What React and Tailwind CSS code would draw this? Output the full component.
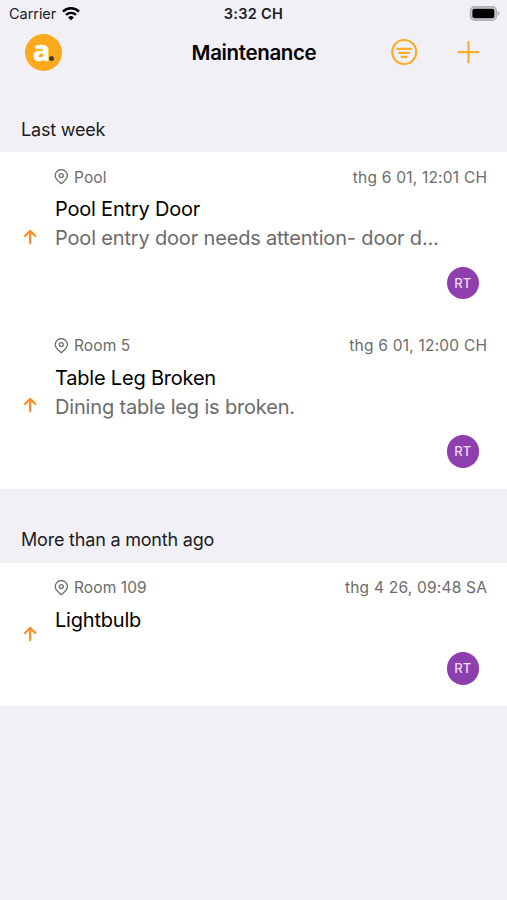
import { clsx } from 'clsx';

const SECTIONS = [
  {
    title: 'Last week',
    tasks: [
      {
        id: 1,
        place: 'Pool',
        date: 'thg 6 01, 12:01 CH',
        title: 'Pool Entry Door',
        description: 'Pool entry door needs attention- door d...',
        assignee: 'RT',
      },
      {
        id: 2,
        place: 'Room 5',
        date: 'thg 6 01, 12:00 CH',
        title: 'Table Leg Broken',
        description: 'Dining table leg is broken.',
        assignee: 'RT',
      },
    ],
  },
  {
    title: 'More than a month ago',
    tasks: [
      {
        id: 3,
        place: 'Room 109',
        date: 'thg 4 26, 09:48 SA',
        title: 'Lightbulb',
        assignee: 'RT',
      },
    ],
  },
];

function WifiIcon() {
  return (
    <svg className="ml-[6px] h-[14px] w-[18px]" viewBox="0 0 18 14" fill="none" stroke="#000" strokeWidth="2.4">
      <path d="M1 4.6a11.4 11.4 0 0 1 16 0" />
      <path d="M4 7.9a7.1 7.1 0 0 1 10 0" />
      <path d="M9 13.3 6.1 10.4a4.1 4.1 0 0 1 5.8 0Z" fill="#000" stroke="none" />
    </svg>
  );
}

function BatteryIcon() {
  return (
    <svg className="h-[15px] w-[31px]" viewBox="0 0 31 15">
      <rect x="1.6" y="0.9" width="25.8" height="13.2" rx="4.2" fill="#d5d5d9" stroke="#b0b0b3" strokeWidth="1.6" />
      <rect x="3.4" y="2.7" width="22" height="9.6" rx="2" fill="#000" />
      <path d="M28.6 5.2c1.2.4 1.9 1.3 1.9 2.3s-.7 1.9-1.9 2.3Z" fill="#b0b0b3" />
    </svg>
  );
}

function PinIcon() {
  return (
    <svg className="h-[16px] w-[14px]" viewBox="0 0 14 16" fill="none" stroke="#6b6b6b" strokeWidth="1.3">
      <path d="M7.3 14.7C6.2 13.2 1.2 10.6 1.2 6.7a6.1 6.1 0 0 1 12.2 0C13.4 10.6 8.4 13.2 7.3 14.7Z" strokeLinejoin="round" />
      <circle cx="7.3" cy="6.6" r="2" />
    </svg>
  );
}

function ArrowUpIcon() {
  return (
    <svg
      className="h-[16px] w-[14px]"
      viewBox="0 0 14 16"
      fill="none"
      stroke="#f8922f"
      strokeWidth="2.3"
      strokeLinecap="round"
      strokeLinejoin="round"
    >
      <path d="M7.2 14.2V2M2.1 7 7.2 1.9 12.3 7" />
    </svg>
  );
}

function StatusBar() {
  return (
    <div className="grid h-[27px] grid-cols-3 items-center pl-[9px] pr-[7px] text-[14.5px] leading-none text-[#1c1c1e]">
      <div className="flex items-center">
        <span className="pt-px tracking-[-0.05px]">Carrier</span>
        <WifiIcon />
      </div>
      <span className="-ml-[2px] pt-[2px] text-center text-[14.5px] font-semibold tracking-[0.3px]">3:32 CH</span>
      <div className="flex justify-end">
        <BatteryIcon />
      </div>
    </div>
  );
}

function NavBar() {
  return (
    <header className="grid h-[50px] grid-cols-[1fr_auto_1fr] items-center pl-[25px] pr-[27px]">
      <div className="flex size-[37px] items-center justify-center rounded-full bg-[#fcaa1b] pb-[4px]">
        <span className="font-['Open_Sans'] text-[29px] font-bold leading-[30px] text-white [-webkit-text-stroke:0.6px_white]">a</span>
        <span className="-ml-px mt-[16px] size-[5px] rounded-full bg-[#3f3a35]" />
      </div>
      <h1 className="pl-[3px] pt-[2px] text-[20.5px] font-semibold tracking-[-0.35px] text-black">Maintenance</h1>
      <div className="flex items-center justify-end gap-[39px]">
        <button type="button" aria-label="Filter">
          <svg className="size-[27px]" viewBox="0 0 27 27" fill="none" stroke="#fbad2b" strokeWidth="2.2" strokeLinecap="round">
            <circle cx="13.2" cy="13" r="12" />
            <path d="M6.3 9.8h13.8M8.3 13.8h9.8M10.7 17.8h5" />
          </svg>
        </button>
        <button type="button" aria-label="Add">
          <svg className="size-[23px]" viewBox="0 0 23 23" fill="none" stroke="#fbad2b" strokeWidth="2.2" strokeLinecap="round">
            <path d="M11.5 1.2v20M1.5 11.2h20" />
          </svg>
        </button>
      </div>
    </header>
  );
}

function TaskRow({ task }) {
  return (
    <li className={clsx('flex items-center bg-white pl-[23px]', task.description ? 'h-[168.5px]' : 'h-[143.5px]')}>
      <ArrowUpIcon />
      <div className="flex h-full min-w-0 flex-1 flex-col pl-[17px] pr-5 pt-[15px]">
        <div className="flex h-5 items-center text-[15.5px] text-[#6b6b6b]">
          <PinIcon />
          <span className="ml-[6px] flex-1 tracking-[0.1px]">{task.place}</span>
          <span className="-mr-[0.2px] tracking-[0.22px]">{task.date}</span>
        </div>
        <h3 className="ml-px mt-2 h-[29px] whitespace-nowrap text-[20px] leading-[29px] tracking-[-0.2px] text-black">
          {task.title}
        </h3>
        {task.description && (
          <p className="ml-px h-[29px] whitespace-nowrap text-[20px] leading-[29px] tracking-[-0.17px] text-[#6b6b6b]">
            {task.description}
          </p>
        )}
        <div className="mb-[21.5px] mr-2 mt-auto flex size-[32.5px] items-center justify-center self-end rounded-full bg-[#8e3fae] pt-px text-[13px] font-medium text-[#f0dcf5]">
          {task.assignee}
        </div>
      </div>
    </li>
  );
}

export default function App() {
  return (
    <div className="min-h-screen w-full overflow-hidden bg-[#f1f0f6] font-['Inter',sans-serif]">
      <StatusBar />
      <NavBar />
      <main className="pt-[2px]">
        {SECTIONS.map((section) => (
          <section key={section.title}>
            <h2 className="flex h-[73.3px] items-end pb-[10.5px] pl-[21px] text-[18px] leading-6 tracking-[-0.2px] text-[#1c1c1e]">
              {section.title}
            </h2>
            <ul>
              {section.tasks.map((task) => (
                <TaskRow key={task.id} task={task} />
              ))}
            </ul>
          </section>
        ))}
      </main>
    </div>
  );
}
